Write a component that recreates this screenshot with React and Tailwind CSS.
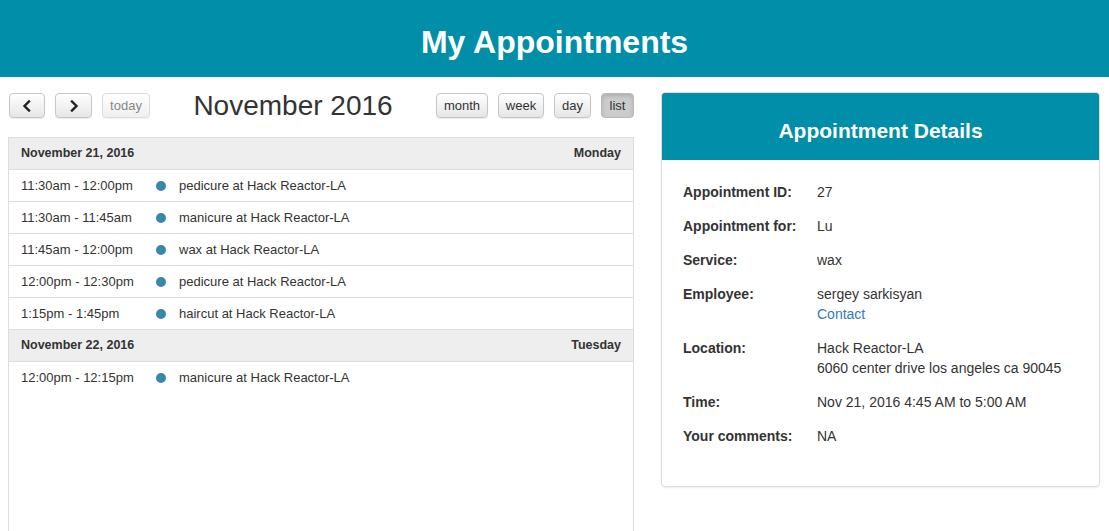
import React from 'react';

const events = [
  { date: 'November 21, 2016', day: 'Monday', items: [
    { time: '11:30am - 12:00pm', title: 'pedicure at Hack Reactor-LA' },
    { time: '11:30am - 11:45am', title: 'manicure at Hack Reactor-LA' },
    { time: '11:45am - 12:00pm', title: 'wax at Hack Reactor-LA' },
    { time: '12:00pm - 12:30pm', title: 'pedicure at Hack Reactor-LA' },
    { time: '1:15pm - 1:45pm', title: 'haircut at Hack Reactor-LA' },
  ] },
  { date: 'November 22, 2016', day: 'Tuesday', items: [
    { time: '12:00pm - 12:15pm', title: 'manicure at Hack Reactor-LA' },
  ] },
];

const Btn = ({ children, className = '', active, disabled }) => (
  <button
    className={`h-[25px] px-[8px] rounded-[4px] border text-[13px] leading-none flex items-center justify-center ${
      active
        ? 'bg-[#cccccc] border-[#b8b8b8] text-[#333] shadow-[inset_0_2px_4px_rgba(0,0,0,0.15)]'
        : 'bg-gradient-to-b from-white to-[#e6e6e6] border-[#c6c6c6] text-[#333] shadow-[0_1px_1px_rgba(0,0,0,0.08)]'
    } ${disabled ? 'opacity-60' : ''} ${className}`}
  >
    {children}
  </button>
);

const Chevron = ({ dir }) => (
  <svg width="10" height="12" viewBox="0 0 10 12" fill="none">
    <path
      d={dir === 'left' ? 'M7 1.5 L2.5 6 L7 10.5' : 'M3 1.5 L7.5 6 L3 10.5'}
      stroke="#222"
      strokeWidth="2.4"
      strokeLinecap="square"
    />
  </svg>
);

const DetailRow = ({ label, children }) => (
  <div className="flex mb-[14px] leading-[20px]">
    <div className="w-[134px] font-bold shrink-0">{label}</div>
    <div>{children}</div>
  </div>
);

export default function App() {
  const rows = events.flatMap((g) => [
    { type: 'head', ...g },
    ...g.items.map((e) => ({ type: 'item', ...e })),
  ]);
  return (
    <div className="min-h-screen bg-white text-[#333]" style={{ fontFamily: '"Liberation Sans", Arial, sans-serif' }}>
      <div className="h-[77px] bg-[#008ea8] flex items-center justify-center pt-[6px]">
        <h1 className="text-white text-[32px] font-bold leading-none">My Appointments</h1>
      </div>
      <div className="flex pl-[8px] pr-[9px] pt-[16px] gap-[27px]">
        <div className="w-[626px] shrink-0 flex flex-col">
          <div className="flex items-center justify-between h-[25px] mb-[19px]">
            <div className="flex gap-[10px] pl-[1px]">
              <Btn className="w-[36px]"><Chevron dir="left" /></Btn>
              <Btn className="w-[37px]"><Chevron dir="right" /></Btn>
              <Btn className="w-[48px]" disabled>today</Btn>
            </div>
            <h2 className="text-[28px] leading-none text-[#333]">November 2016</h2>
            <div className="flex gap-[10px]">
              <Btn className="w-[52px]">month</Btn>
              <Btn className="w-[46px]">week</Btn>
              <Btn className="w-[37px]">day</Btn>
              <Btn className="w-[33px]" active>list</Btn>
            </div>
          </div>
          <div className="border border-[#dddddd] border-b-0 h-[394px] text-[13px]">
            {rows.map((r, i) => {
              const last = i === rows.length - 1;
              return r.type === 'head' ? (
                <div key={i} className="h-[32px] bg-[#eeeeee] border-b border-[#dddddd] flex items-center justify-between px-[12px] font-bold text-[12.5px]">
                  <span>{r.date}</span>
                  <span>{r.day}</span>
                </div>
              ) : (
                <div key={i} className={`h-[32px] flex items-center ${last ? '' : 'border-b border-[#dddddd]'}`}>
                  <span className="w-[147px] pl-[12px] shrink-0">{r.time}</span>
                  <span className="w-[10px] h-[10px] rounded-full bg-[#3a87ad] shrink-0"></span>
                  <span className="pl-[13px]">{r.title}</span>
                </div>
              );
            })}
          </div>
        </div>
        <div className="flex-1 -mt-px">
          <div className="border border-[#dddddd] rounded-[4px] shadow-[0_1px_2px_rgba(0,0,0,0.08)] overflow-hidden">
            <div className="h-[67px] bg-[#008ea8] flex items-center justify-center pt-[7px]">
              <h3 className="text-white text-[21px] font-bold leading-none">Appointment Details</h3>
            </div>
            <div className="pl-[21px] pr-[20px] pt-[22px] pb-[26px] text-[14px]">
              <DetailRow label="Appointment ID:">27</DetailRow>
              <DetailRow label="Appointment for:">Lu</DetailRow>
              <DetailRow label="Service:">wax</DetailRow>
              <DetailRow label="Employee:">
                <div>sergey sarkisyan</div>
                <a className="text-[#337ab7]" href="#">Contact</a>
              </DetailRow>
              <DetailRow label="Location:">
                <div>Hack Reactor-LA</div>
                <div>6060 center drive los angeles ca 90045</div>
              </DetailRow>
              <DetailRow label="Time:">Nov 21, 2016 4:45 AM to 5:00 AM</DetailRow>
              <DetailRow label="Your comments:">NA</DetailRow>
            </div>
          </div>
        </div>
      </div>
    </div>
  );
}
